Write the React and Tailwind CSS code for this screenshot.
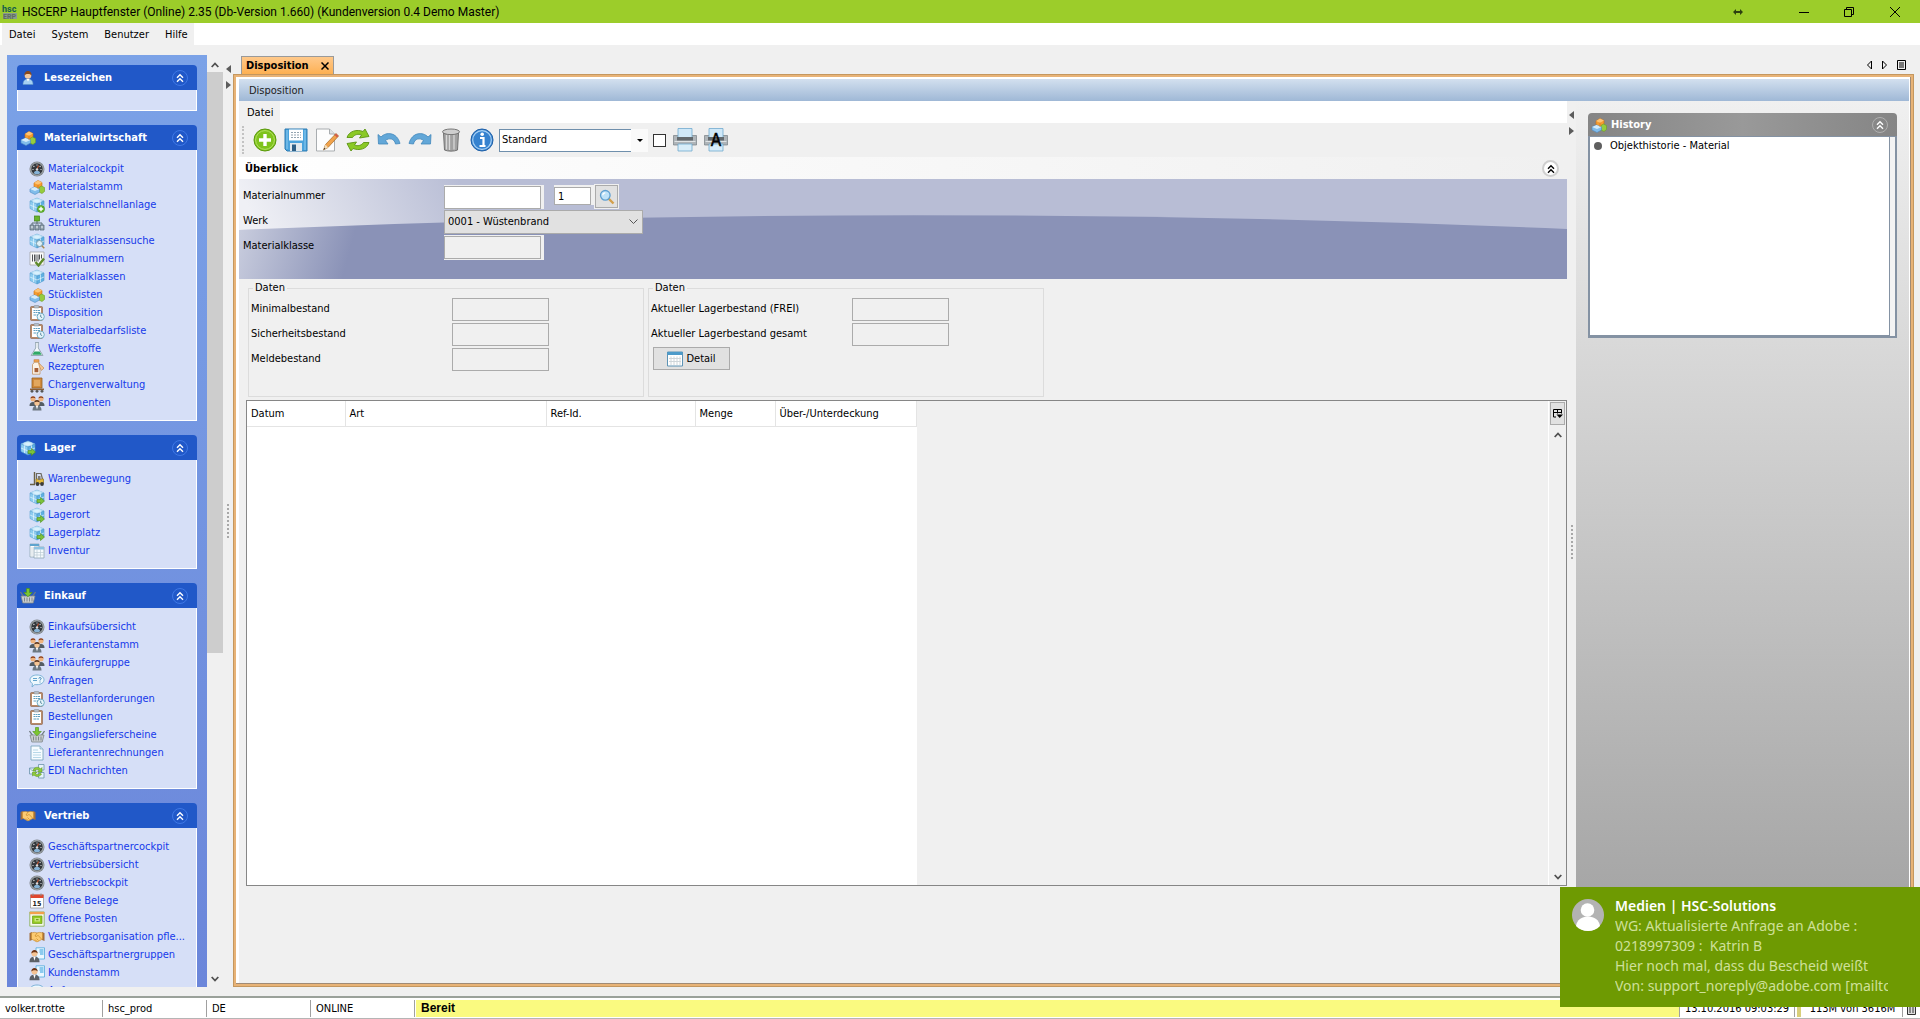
import { useState } from "react";

const groups = [
  { title: "Lesezeichen", icon: "person", items: [] },
  {
    title: "Materialwirtschaft",
    icon: "blocks",
    items: [
      ["Materialcockpit", "gauge"],
      ["Materialstamm", "blocks"],
      ["Materialschnellanlage", "cubeAdd"],
      ["Strukturen", "tree"],
      ["Materialklassensuche", "cubeSearch"],
      ["Serialnummern", "barcode"],
      ["Materialklassen", "cube"],
      ["Stücklisten", "blocks"],
      ["Disposition", "clipClock"],
      ["Materialbedarfsliste", "clipClock"],
      ["Werkstoffe", "flask"],
      ["Rezepturen", "bottle"],
      ["Chargenverwaltung", "crate"],
      ["Disponenten", "people"],
    ],
  },
  {
    title: "Lager",
    icon: "cubeArrow",
    items: [
      ["Warenbewegung", "forklift"],
      ["Lager", "cubeArrow"],
      ["Lagerort", "cubeArrow"],
      ["Lagerplatz", "cubeArrow"],
      ["Inventur", "sheets"],
    ],
  },
  {
    title: "Einkauf",
    icon: "basket",
    items: [
      ["Einkaufsübersicht", "gauge"],
      ["Lieferantenstamm", "people"],
      ["Einkäufergruppe", "people"],
      ["Anfragen", "bubble"],
      ["Bestellanforderungen", "clipClock"],
      ["Bestellungen", "clip"],
      ["Eingangslieferscheine", "basket"],
      ["Lieferantenrechnungen", "page"],
      ["EDI Nachrichten", "edi"],
    ],
  },
  {
    title: "Vertrieb",
    icon: "handshake",
    items: [
      ["Geschäftspartnercockpit", "gauge"],
      ["Vertriebsübersicht", "gauge"],
      ["Vertriebscockpit", "gauge"],
      ["Offene Belege", "calendar"],
      ["Offene Posten", "posten"],
      ["Vertriebsorganisation pfle...", "handshake"],
      ["Geschäftspartnergruppen", "contact"],
      ["Kundenstamm", "contact"],
      ["Anfragen", "bubble"],
    ],
  },
];

const cube = (
  <>
    <path d="M1 4 8 1l7 3-7 3z" fill="#c9e9fa" stroke="#6fb3dc" strokeWidth=".6" />
    <path d="M1 4l7 3v8l-7-3.500z" fill="#8fcdf0" stroke="#5aa4d3" strokeWidth=".6" />
    <path d="M15 4 8 7v8l7-3.500z" fill="#5fb0e2" stroke="#4b97cb" strokeWidth=".6" />
    <path d="M1 8l7 3 7-3M4.500 2.500l7 3v7.500M11.500 2.500l-7 3v7.500" fill="none" stroke="#e4f5fd" strokeWidth=".7" />
  </>
);

const clipboard = (
  <>
    <rect x="1.500" y="1.500" width="12" height="14" rx="1" fill="#b98a68" stroke="#8a5f43" strokeWidth=".6" />
    <rect x="3" y="3" width="9" height="11" fill="#fff" />
    <rect x="5" y=".5" width="5" height="2.500" rx=".8" fill="#b9c0c7" stroke="#7b858e" strokeWidth=".5" />
    <path d="M4.500 5.500h2M7 5.500h1.500M9 5.500h2M4.500 7.500h2M7 7.500h1.500M9 7.500h2M4.500 10h3M8 10h2" stroke="#5f9fc0" strokeWidth="1.200" />
  </>
);

const icons = {
  person: (
    <>
      <path d="M3 14.500c0-4 2-5.500 5-5.500s5 1.500 5 5.500z" fill="#a5d0f2" stroke="#5d93c7" strokeWidth=".6" />
      <path d="M6.500 9 8 11.500 9.500 9z" fill="#fff" />
      <circle cx="8" cy="5.500" r="3.300" fill="#f3c9a0" />
      <path d="M4.500 6C4 2.500 6 1 8 1s4 1.500 3.500 5C11 4.500 10 4 8 4S5 4.500 4.500 6z" fill="#8a4a1f" />
    </>
  ),
  blocks: (
    <>
      <path d="M5 4 9 1.500 13 3.500v4L9 10 5 8z" fill="#f59c2f" stroke="#c9701a" strokeWidth=".6" />
      <path d="M5 4 9 1.500 13 3.500 9 5.700z" fill="#fcc476" />
      <path d="M10 8.500 12.500 7 15.500 8.500v4L13 14.500l-3-1.500z" fill="#95cc3f" stroke="#6b9e22" strokeWidth=".6" />
      <path d="M1 10l4.500-2 5 2v3L6 15.500 1 13z" fill="#82bdeb" stroke="#4d8ac4" strokeWidth=".6" />
      <path d="M1 10l4.500-2 5 2L6 12z" fill="#d3ebfb" />
      <path d="M9 5.700V10" stroke="#c9701a" strokeWidth=".6" />
    </>
  ),
  gauge: (
    <>
      <circle cx="8" cy="8" r="7.500" fill="#7f868b" />
      <circle cx="8" cy="8" r="6.200" fill="#33383c" stroke="#c5cacd" strokeWidth=".8" />
      <path d="M8 3.500v1M4.500 5l.8.800M11.500 5l-.8.800M3.500 8.500h1M11.500 8.500h1" stroke="#e8e8e8" strokeWidth="1.100" />
      <path d="M8 8.500 9.500 4.500" stroke="#e55a2b" strokeWidth="1" />
      <path d="M4.800 12.200c.7-3.200 5.700-3.200 6.400 0-1.800 1.400-4.600 1.400-6.400 0z" fill="#86b3d6" />
      <circle cx="8" cy="8.500" r="1.200" fill="#d9dcde" />
    </>
  ),
  cube,
  cubeAdd: (
    <>
      {cube}
      <circle cx="12" cy="12" r="3.600" fill="#62b32b" stroke="#3f8a12" strokeWidth=".5" />
      <path d="M12 9.800v4.400M9.800 12h4.400" stroke="#fff" strokeWidth="1.400" />
    </>
  ),
  cubeSearch: (
    <>
      {cube}
      <circle cx="10.500" cy="10.500" r="3" fill="#dff1f7" stroke="#7b98a4" strokeWidth=".9" />
      <path d="m12.800 12.800 2.500 2.500" stroke="#a78951" strokeWidth="1.500" />
    </>
  ),
  cubeArrow: (
    <>
      {cube}
      <path d="M8 10.500h3.500V8.500l4 3.500-4 3.500v-2H8z" fill="#7cc13a" stroke="#4c8d17" strokeWidth=".6" />
    </>
  ),
  tree: (
    <>
      <path d="M8 6v3M3 10V8h10v2" fill="none" stroke="#5b6d75" />
      <rect x="5.500" y="1" width="5" height="5" fill="#6ab42d" stroke="#3f8212" strokeWidth=".7" />
      <path d="M1 10h4v5H1zM6 10h4v5H6zM11 10h4v5h-4z" fill="#98a7b2" stroke="#4f6170" strokeWidth=".7" />
      <path d="M2 12h2M7 12h2M12 12h2" stroke="#e6edf2" />
    </>
  ),
  barcode: (
    <>
      <path d="M1 1h14v13H1z" fill="#fafafa" stroke="#9b9b9b" strokeWidth=".7" />
      <path d="M3.500 3.500v7M5.500 3.500v7M7 3.500v7M9 3.500v7M10.500 3.500v5M12.500 3.500v4" stroke="#4f5254" />
      <path d="m6.500 11 3 3.500 5.500-7" fill="none" stroke="#5f8b2b" strokeWidth="2.400" />
    </>
  ),
  clip: clipboard,
  clipClock: (
    <>
      {clipboard}
      <circle cx="11.700" cy="11.700" r="3.600" fill="#e8f6fb" stroke="#65a5bd" strokeWidth=".9" />
      <path d="M11.700 9.700v2.200l1.500.8" fill="none" stroke="#3c7590" strokeWidth=".8" />
    </>
  ),
  flask: (
    <>
      <path d="M6 1.500h4M6.700 1.500V7L2 14.500h12L9.300 7V1.500" fill="#f3f8fb" stroke="#9aaab6" />
      <path d="m5.300 10.500-2 3.300h9.400l-2-3.300z" fill="#2fa866" />
    </>
  ),
  bottle: (
    <>
      <rect x="5" y=".8" width="5" height="2.400" fill="#f0a14d" stroke="#b86d22" strokeWidth=".5" />
      <path d="M5.500 3.200h4L11 5.500v9.700H3.500V5.500z" fill="#fbf3e8" stroke="#c29362" strokeWidth=".8" />
      <path d="M5.500 9h3.800v4.200H5.500z" fill="#a65f36" />
      <path d="m9.500 4 5.500 5-2.500 2.500-2-4z" fill="#f4c894" stroke="#bf8345" strokeWidth=".6" />
    </>
  ),
  crate: (
    <>
      <path d="M3 1h10v10H3z" fill="#d08a3c" stroke="#98601f" strokeWidth=".8" />
      <path d="M5 3h6v6H5z" fill="#e2a75e" />
      <path d="M1 11.500h14v1.700H1z" fill="#8b5e35" />
      <circle cx="3" cy="14.300" r="1.400" fill="#555" />
      <circle cx="8" cy="14.300" r="1.400" fill="#555" />
      <circle cx="13" cy="14.300" r="1.400" fill="#555" />
    </>
  ),
  people: (
    <>
      <path d="M.5 11c0-3 1.500-4 3.500-4s3.500 1 3.500 4zM8.500 11c0-3 1.500-4 3.500-4s3.500 1 3.500 4z" fill="#535c63" />
      <circle cx="4" cy="4" r="2.500" fill="#efb37e" />
      <circle cx="12" cy="4" r="2.500" fill="#efb37e" />
      <path d="M1.500 3.500C1.500.5 6.500.5 6.500 3.500 5.500 2.500 3 2.500 1.500 3.500zM9.500 3.500c0-3 5-3 5 0-1-1-4-1-5 0z" fill="#8b3f1c" />
      <path d="M3.500 15.500C3.500 12 5 10.500 8 10.500s4.500 1.500 4.500 5z" fill="#6c7780" />
      <path d="m6.800 10.500 1.200 4 1.200-4z" fill="#fff" />
      <circle cx="8" cy="8" r="2.700" fill="#f5c493" />
      <path d="M5.300 7.500c0-3.200 5.400-3.200 5.400 0-1-1-4.400-1-5.400 0z" fill="#5a3218" />
    </>
  ),
  forklift: (
    <>
      <path d="M5.500 1v12M1 13.500h5" fill="none" stroke="#6a6046" strokeWidth="1.400" />
      <path d="M7.500 8V2.500h4.500L13.500 8" fill="none" stroke="#6d6a60" strokeWidth="1.200" />
      <path d="M7 8h7.500v4.500H7z" fill="#e5bb3d" stroke="#94741b" strokeWidth=".7" />
      <path d="M9 5h2.500v4H9z" fill="#807b70" />
      <circle cx="8.500" cy="13" r="1.900" fill="#3c3c3c" />
      <circle cx="13" cy="13" r="1.900" fill="#3c3c3c" />
    </>
  ),
  sheets: (
    <>
      <path d="M1 1h9v13H1z" fill="#fff" stroke="#8fa6b5" strokeWidth=".8" />
      <path d="M1 1h9v2H1z" fill="#5ea4ce" />
      <path d="M5 4h10v11H5z" fill="#f6fbfe" stroke="#8fa6b5" strokeWidth=".8" />
      <path d="M5 4h10v2.500H5z" fill="#8ec3e2" />
      <path d="M8 6.500V15M11.500 6.500V15M5 9.500h10M5 12h10M3 4v9" stroke="#bccbd4" strokeWidth=".7" />
    </>
  ),
  basket: (
    <>
      <path d="M.5 4 4 9M15.500 4 12 9" stroke="#6f7a80" strokeWidth="1.300" />
      <path d="M1 8h14l-1.800 7H2.800z" fill="#c9cdcf" stroke="#7d8589" strokeWidth=".8" />
      <path d="M4.500 9.500v4M7 9.500v4M9.500 9.500v4M12 9.500v4" stroke="#80878b" />
      <path d="M6.500.5h3v4h2.800L8 8.800 3.700 4.500h2.800z" fill="#7cc62f" stroke="#4b8f12" strokeWidth=".6" />
    </>
  ),
  bubble: (
    <>
      <path d="M8 2c4 0 7 2 7 4.800s-3 4.900-7 4.900c-.8 0-1.500 0-2.200-.2L3 14l.5-3.300C2 9.800 1 8.400 1 6.800 1 4 4 2 8 2z" fill="#edf8fe" stroke="#72acd3" strokeWidth=".9" />
      <path d="M4 5.500h4M4 7.500h4" stroke="#62a3cd" strokeWidth="1.200" />
      <path d="M9.800 5.500c0-1.200 2.400-1.200 2.400 0 0 1-1.200 1-1.200 2M11 8.500v1" fill="none" stroke="#3d82b4" strokeWidth="1" />
    </>
  ),
  page: (
    <>
      <path d="M2 1h9l3 3v11H2z" fill="#f7fcff" stroke="#7ea7bd" strokeWidth=".9" />
      <path d="M11 1v3h3" fill="#cbe3ef" stroke="#7ea7bd" strokeWidth=".7" />
      <path d="M4 5h5M4 7.500h8M4 10h8M4 12.500h8" stroke="#b7d8e8" strokeWidth="1.100" />
    </>
  ),
  edi: (
    <>
      <path d="M.5 5h6v6h-6zM9.500 1.500H15V7H9.500zM9.500 9.500H15V15H9.500z" fill="#e7f3fa" stroke="#6b93ad" strokeWidth=".8" />
      <path d="m.5 5 3 3 3-3" fill="none" stroke="#6b93ad" strokeWidth=".7" />
      <path d="M4 8c0-4 6-5 7.500-2L13 4.500V9H8.500L10 7.500C9 6 6.500 6.500 6 8zM3.500 9H8l-1.500 1.500c1 1.500 3.500 1 4.500-.5l1.500 1c-1.500 3-5.500 3.200-7.500 1L3.500 13z" fill="#8fca3b" stroke="#58931a" strokeWidth=".5" />
    </>
  ),
  handshake: (
    <>
      <path d="M.5 4 3 3v8L.5 12zM15.500 4 13 3v8l2.500 1z" fill="#a4703c" />
      <path d="M2.500 4c2-.8 4-.8 5.500 0 1.500-.8 3.500-.8 5.500 0v6l-4.500 2.500c-.8.400-1.500.3-2 0L2.500 10z" fill="#fccb72" stroke="#cc8e30" strokeWidth=".7" />
      <path d="M8 4 6 7c1.500 1 2.500 0 3-.700l3.500 3.700M7.500 9.500l2 2M6 10.500l1.500 1.500" fill="none" stroke="#c98927" strokeWidth=".7" />
    </>
  ),
  calendar: (
    <>
      <path d="M1.500 2h13v13h-13z" fill="#fff" stroke="#9a9a9a" strokeWidth=".8" />
      <path d="M1.500 1.500h13v3.500h-13z" fill="#e0472f" />
      <path d="M4 .5v2.500M12 .5v2.500" stroke="#888" />
      <text x="8" y="12.500" fontSize="7" fontWeight="bold" textAnchor="middle" fill="#222">15</text>
    </>
  ),
  posten: (
    <>
      <path d="M.8 1h14.400v14.200H.8z" fill="#f4f8ea" stroke="#84ab4d" strokeWidth=".8" />
      <path d="M.8.8h14.400v2.400H.8z" fill="#f2a14c" />
      <path d="M3.500 5h9.500v7.500H3.500z" fill="#93c921" stroke="#6d9e12" strokeWidth=".7" />
      <path d="M5.500 7H11v3.500H5.500z" fill="#c9e77d" />
      <path d="M7 8.700h2.500" stroke="#5d8b0d" />
    </>
  ),
  contact: (
    <>
      <path d="M7 .8h8.500V12H7z" fill="#eaf7ff" stroke="#4fa9dc" strokeWidth=".8" />
      <path d="M10.500 3h4M10.500 5h4M11 7h3.500" stroke="#2c9ddd" strokeWidth="1.200" />
      <path d="M.5 15.200c0-4.200 2-5.400 5-5.400s5 1.200 5 5.400z" fill="#5c6166" />
      <path d="m4.300 9.800 1.200 4 1.200-4z" fill="#fff" />
      <circle cx="5.500" cy="6.500" r="3" fill="#f5c493" />
      <path d="M2.400 6.500C2 1.800 9 1.800 8.600 6.500 7.500 4.800 4 4.800 2.400 6.500z" fill="#6d3415" />
    </>
  ),
};

function Icon({ name }) {
  return (
    <svg viewBox="0 0 16 16" className="size-4 shrink-0" aria-hidden="true">
      {icons[name]}
    </svg>
  );
}

function DoubleChevron() {
  return (
    <svg viewBox="0 0 10 10" className="size-[10px]" fill="none" stroke="currentColor" strokeWidth="1.400" aria-hidden="true">
      <path d="M2 4.700 5 1.700l3 3M2 8.700l3-3 3 3" />
    </svg>
  );
}

function Chevron({ down = false }) {
  return (
    <svg viewBox="0 0 8 8" className="size-2" fill="none" stroke="#505050" strokeWidth="1.800" aria-hidden="true">
      <path d={down ? "M.7 2 4 5.500 7.300 2" : "M.7 6 4 2.500 7.300 6"} />
    </svg>
  );
}

function Splitter({ className }) {
  return (
    <div className={`relative flex shrink-0 items-center justify-center ${className}`}>
      <div className="absolute inset-x-0 top-2.5 flex flex-col items-center gap-2">
        <svg viewBox="0 0 5 8" className="h-2 w-[5px]" aria-hidden="true">
          <path d="M5 0v8L0 4z" fill="#5c5c5c" />
        </svg>
        <svg viewBox="0 0 5 8" className="h-2 w-[5px]" aria-hidden="true">
          <path d="M0 0v8l5-4z" fill="#5c5c5c" />
        </svg>
      </div>
      <div className="flex flex-col gap-0.5">
        {Array.from({ length: 9 }, (_, i) => (
          <span key={i} className="size-0.5 bg-[#a8a8a8]" />
        ))}
      </div>
    </div>
  );
}

function Group({ title, icon, items }) {
  const [open, setOpen] = useState(true);

  return (
    <section>
      <h2 className="flex h-[25px] items-center rounded-t-[4px] bg-[#2158c8] pr-[9px] pl-[3px] font-bold text-white">
        <Icon name={icon} />
        <span className="ml-2 flex-1">{title}</span>
        <button
          type="button"
          aria-label={title}
          onClick={() => setOpen(!open)}
          className="flex size-4 items-center justify-center rounded-full border border-[#3f78e6]"
        >
          <DoubleChevron />
        </button>
      </h2>
      {open && (
        <ul className={`border border-t-0 border-white bg-[#d6dff7] pl-[11px] ${items.length ? "pt-[10px] pb-2" : "pt-5"}`}>
          {items.map(([label, name]) => (
            <li key={label}>
              <a href="#" className="flex h-[18px] items-center gap-[3px] whitespace-nowrap text-[#1539ea]">
                <Icon name={name} />
                {label}
              </a>
            </li>
          ))}
        </ul>
      )}
    </section>
  );
}

const printer = (
  <>
    <path d="M.5 7.500h23V17H.5z" fill="#aeb4b8" stroke="#777f84" strokeWidth=".7" />
    <path d="M5 .5h14v9H5z" fill="#cfe8f8" stroke="#70a9ce" strokeWidth=".8" />
    <path d="M4 9h16v3.500H4z" fill="#62696e" />
    <path d="M1.500 13.500h21" stroke="#dfe3e5" />
    <path d="M5 16h14v7H5z" fill="#d8edf9" stroke="#70a9ce" strokeWidth=".8" />
  </>
);

const tools = [
  [
    "Neu",
    <>
      <circle cx="12" cy="12" r="11" fill="#7fc31c" stroke="#59980c" />
      <circle cx="12" cy="12" r="9.400" fill="none" stroke="#b3e063" />
      <path d="M12 6v12M6 12h12" stroke="#fff" strokeWidth="3.400" />
    </>,
  ],
  [
    "Speichern",
    <>
      <path d="M1 1h22v22H3l-2-2z" fill="#4ba3dc" stroke="#2d7ab2" />
      <path d="M3 2v19M21 2v20" stroke="#8fcbf0" />
      <path d="M5 1.500h14v11H5z" fill="#fff" />
      <path d="M7 4.500h10M7 7h10M7 9.500h10" stroke="#93a4b0" strokeWidth="1.100" strokeDasharray="2 1" />
      <path d="M6 15h12v8H6z" fill="#e3e9ed" />
      <path d="M8 16.500h4V23H8z" fill="#2e5f86" />
    </>,
  ],
  [
    "Bearbeiten",
    <>
      <path d="M1.500 1h13l5 5v17h-18z" fill="#fdfdfd" stroke="#a9adb0" />
      <path d="M14.500 1v5h5" fill="#dfe2e4" stroke="#a9adb0" />
      <path d="m8.500 22 2-5.500L21 5.500l2.500 2.500L13 19.500z" fill="#f0a24b" stroke="#a56822" strokeWidth=".7" />
      <path d="m8.500 22 2-5.500 2.500 3z" fill="#f4ddb9" />
      <path d="m8.500 22 .8-2.200 1.200 1z" fill="#333" />
      <path d="m19.500 7 1.500-1.500 2.500 2.500-1.500 1.500z" fill="#d25c4a" />
    </>,
  ],
  [
    "Aktualisieren",
    <>
      <path d="M1 9.500C3 3 11 1 17 3.500L19 1l4 7.500-9.500 1.500 2-3C12.500 5.500 8.500 6.500 6.500 9.500z" fill="#8bc926" stroke="#5c9413" strokeWidth=".9" />
      <path d="M23 14.500C21 21 13 23 7 20.500L5 23l-4-7.500L10.500 14l-2 3c3 1.500 7 .5 9-2.500z" fill="#8bc926" stroke="#5c9413" strokeWidth=".9" />
    </>,
  ],
  [
    "Rückgängig",
    <path d="M1 6.500 4 9C9 3.500 20 4 23 15.500l-4.500.5C17.500 10.500 12 9.500 8.500 12.500L11 16H1.500z" fill="#62a7d8" stroke="#4288bb" strokeWidth=".8" />,
  ],
  [
    "Wiederholen",
    <path d="M23 6.500 20 9C15 3.500 4 4 1 15.500l4.500.5C6.500 10.500 12 9.500 15.500 12.500L13 16h9.500z" fill="#62a7d8" stroke="#4288bb" strokeWidth=".8" />,
  ],
  [
    "Löschen",
    <>
      <path d="M4.500 5h15l-1 17c-3 1.500-10 1.500-13 0z" fill="#a2a2a2" stroke="#727272" />
      <path d="M7.500 7v14.500M10.500 7v15M15 7v14.500" stroke="#d8d8d8" strokeWidth="1.300" />
      <ellipse cx="12" cy="3.800" rx="8.500" ry="2.800" fill="#cfcfcf" stroke="#777" />
    </>,
  ],
  [
    "Info",
    <>
      <circle cx="12" cy="12" r="11" fill="#3582cf" stroke="#1f5fa6" />
      <circle cx="12" cy="12" r="9.300" fill="none" stroke="#a9d2f5" strokeWidth="1.200" />
      <path d="M10 10h3.500v7.500M9.500 18h6" fill="none" stroke="#fff" strokeWidth="2.200" />
      <circle cx="12.200" cy="6.300" r="1.800" fill="#fff" />
    </>,
  ],
];

function ToolButton({ label, children }) {
  return (
    <button type="button" aria-label={label} className="flex size-6 shrink-0 items-center justify-center">
      <svg viewBox="0 0 24 24" className="size-6" aria-hidden="true">
        {children}
      </svg>
    </button>
  );
}

function Field({ id, label }) {
  return (
    <div className="flex h-[25px] items-center">
      <label htmlFor={id} className="w-[201px] pb-0.5">{label}</label>
      <input id={id} readOnly className="h-[23px] w-[97px] border border-[#ababab] bg-[#f0f0f0] px-1" />
    </div>
  );
}

function Toolbar() {
  return (
    <div className="flex h-[34px] items-center gap-[7px] bg-[#f0f0f0] pl-[3px]">
      <span className="mr-0.5 h-7 border-l-2 border-dotted border-[#c2c2c2]" />
      {tools.map(([label, drawing]) => (
        <ToolButton key={label} label={label}>{drawing}</ToolButton>
      ))}
      <div className="relative -ml-0.5 flex">
        <select aria-label="Ansicht" className="h-[23px] w-[149px] appearance-none border border-[#6f8fac] bg-white px-0.5">
          <option>Standard</option>
        </select>
        <span className="pointer-events-none absolute inset-y-0 right-0 flex w-[17px] items-center justify-center bg-[#fafafa]">
          <svg viewBox="0 0 6 3" className="h-[3px] w-1.5" aria-hidden="true">
            <path d="M0 0h6L3 3z" />
          </svg>
        </span>
      </div>
      <input
        type="checkbox"
        aria-label="Filter"
        className="-ml-0.5 size-[13px] appearance-none border border-[#333] bg-white checked:bg-[#333]"
      />
      <ToolButton label="Drucken">{printer}</ToolButton>
      <ToolButton label="Druckvorschau">
        {printer}
        <text x="12" y="18" fontSize="17" textAnchor="middle" stroke="#000" strokeWidth=".5">A</text>
      </ToolButton>
    </div>
  );
}

function Overview() {
  return (
    <section>
      <div className="flex h-[22px] items-center justify-between bg-linear-to-r from-white to-[#f0f0f0] pt-px pr-2 pl-1.5">
        <h2 className="font-bold">Überblick</h2>
        <button
          type="button"
          aria-label="Überblick"
          className="flex size-[17px] items-center justify-center rounded-full border-2 border-[#cfcfcf] bg-white"
        >
          <DoubleChevron />
        </button>
      </div>
      <div className="relative h-[100px] bg-[#b8bdd5]">
        <svg viewBox="0 0 1328 100" preserveAspectRatio="none" className="absolute inset-0 size-full" aria-hidden="true">
          <defs>
            <linearGradient id="upper" gradientUnits="userSpaceOnUse" x1="20" y1="50" x2="200" y2="-40">
              <stop offset="0" stopColor="#eff0f5" />
              <stop offset="1" stopColor="#b8bdd5" />
            </linearGradient>
            <linearGradient id="lower" gradientUnits="userSpaceOnUse" x1="0" y1="45" x2="110" y2="75">
              <stop offset="0" stopColor="#c9cdde" />
              <stop offset="1" stopColor="#8a92b7" />
            </linearGradient>
          </defs>
          <path d="M0 0h1328v100H0z" fill="url(#upper)" />
          <path d="M0 51Q664 22 1328 50v50H0z" fill="url(#lower)" />
        </svg>
        <div className="relative grid grid-cols-[201px_1fr] content-start pt-[6px] pl-1">
          <label htmlFor="material" className="pt-1">Materialnummer</label>
          <div className="flex h-[25px] items-start">
            <div className="h-6 w-[100px] bg-[#f0f0f0] pt-px">
              <input id="material" className="block h-[23px] w-[97px] border border-[#ababab] bg-white px-1" />
            </div>
            <div className="ml-2.5 h-5 w-[41px] bg-[#f0f0f0] pt-0.5">
              <input aria-label="Anzahl" defaultValue="1" className="block h-[18px] w-[37px] border border-[#ababab] bg-white px-[3px]" />
            </div>
            <button
              type="button"
              aria-label="Suchen"
              className="flex h-[23px] w-[23px] items-center justify-center border border-[#ababab] bg-[#e1e1e1] outline outline-[#f0f0f0]"
            >
              <svg viewBox="0 0 16 16" className="size-4" aria-hidden="true">
                <path d="m9.500 9.500 5 5" stroke="#d4a04b" strokeWidth="2.400" />
                <circle cx="6.300" cy="6.300" r="4.800" fill="#bfe2f8" stroke="#5f9fd0" strokeWidth="1.300" />
                <path d="M3.800 6.300c0-1.500 1-2.500 2.500-2.500" fill="none" stroke="#fff" strokeWidth="1.200" />
              </svg>
            </button>
          </div>
          <label htmlFor="werk" className="pt-1">Werk</label>
          <div className="relative h-[25px] w-[199px]">
            <select id="werk" className="block h-6 w-full appearance-none border border-[#ababab] bg-[#e1e1e1] px-[3px]">
              <option>0001 - Wüstenbrand</option>
            </select>
            <svg viewBox="0 0 9 6" className="pointer-events-none absolute top-[9px] right-[5px] h-1.5 w-[9px]" fill="none" stroke="#555" aria-hidden="true">
              <path d="m.5.5 4 4 4-4" />
            </svg>
          </div>
          <label htmlFor="klasse" className="pt-1">Materialklasse</label>
          <div className="h-[25px] w-[100px] bg-[#f0f0f0] pt-px">
            <input id="klasse" readOnly className="block h-[23px] w-[97px] border border-[#ababab] bg-[#f0f0f0] px-1" />
          </div>
        </div>
      </div>
    </section>
  );
}

const columns = [
  ["Datum", "w-[98px]"],
  ["Art", "w-[201px]"],
  ["Ref-Id.", "w-[149px]"],
  ["Menge", "w-[80px]"],
  ["Über-/Unterdeckung", "w-[141px]"],
];

function ResultTable() {
  return (
    <div className="mb-[97px] ml-[7px] flex min-h-0 flex-1 border border-[#868686] bg-[#f0f0f0]">
      <div className="bg-white">
        <table className="table-fixed border-collapse">
          <thead>
            <tr>
              {columns.map(([label, width]) => (
                <th key={label} className={`h-[25px] border-r border-b border-[#e4e4e4] pt-0.5 pl-1 text-left font-normal ${width}`}>
                  {label}
                </th>
              ))}
            </tr>
          </thead>
        </table>
      </div>
      <div className="ml-auto flex w-[18px] flex-col items-center justify-between border-l border-white pt-px pb-1">
        <div className="flex flex-col items-center gap-1.5">
          <button type="button" aria-label="Spalten" className="flex h-[23px] w-[15px] items-center justify-center border border-[#ababab] bg-[#e1e1e1]">
            <svg viewBox="0 0 10 11" className="h-[11px] w-[10px]" aria-hidden="true">
              <path d="M3 9H.5V1.500h8v4M.5 4.500h8M4.500 1.500v4" fill="none" stroke="#000" />
              <path d="M3.500 6.500H10L6.700 10z" />
            </svg>
          </button>
          <Chevron />
        </div>
        <Chevron down />
      </div>
    </div>
  );
}

function HistoryPanel() {
  return (
    <aside className="w-[333px] shrink-0 bg-linear-to-b from-[#f0f0f0] to-[#9e9e9e] px-3 pt-3">
      <h2 className="flex h-[23px] items-center rounded-t-[4px] bg-linear-to-r from-[#858585] via-[#999] to-[#858585] pr-[9px] pl-[3px] font-bold text-white">
        <Icon name="blocks" />
        <span className="ml-1 flex-1">History</span>
        <button type="button" aria-label="History" className="flex size-4 items-center justify-center rounded-full border border-[#b0b0b0]">
          <DoubleChevron />
        </button>
      </h2>
      <div className="border-2 border-t border-[#8492a3] bg-[#f3f3f3] pr-[5px]">
        <ul className="h-[199px] border-r border-b border-[#8492a3] bg-white">
          <li className="flex h-[18px] items-center gap-2 pl-1">
            <span className="size-2 rounded-full bg-[#5f5f5f]" />
            Objekthistorie - Material
          </li>
        </ul>
      </div>
    </aside>
  );
}

function Toast() {
  return (
    <div role="status" className="absolute right-0 bottom-3 flex h-[120px] w-[360px] gap-[11px] overflow-hidden bg-[#6e9a02] pt-[9px] pr-8 pl-3 font-['Noto_Sans','Open_Sans',sans-serif] text-[14px] leading-5 text-[#cfe09a]">
      <svg viewBox="0 0 32 32" className="mt-[3px] size-8 shrink-0" aria-hidden="true">
        <circle cx="16" cy="16" r="16" fill="#b3b3b3" />
        <circle cx="15.500" cy="11" r="6.800" fill="#fff" />
        <path d="M4 27c1-6 5.500-9.500 12-9.500S27 21 28 27c-6 6.600-18 6.600-24 0z" fill="#fff" />
      </svg>
      <div className="min-w-0 overflow-hidden whitespace-pre">
        <p className="font-semibold text-white">Medien | HSC-Solutions</p>
        <p>WG: Aktualisierte Anfrage an Adobe :</p>
        <p>{"0218997309 :  Katrin B"}</p>
        <p>Hier noch mal, dass du Bescheid weißt</p>
        <p>Von: support_noreply@adobe.com [mailto</p>
      </div>
    </div>
  );
}

export default function App() {
  return (
    <div className="relative flex h-screen flex-col overflow-hidden bg-[#f0f0f0] font-['DejaVu_Sans_Condensed','Noto_Sans',sans-serif] text-[11px] leading-[14px] text-black">
      <header className="flex h-[23px] shrink-0 items-center bg-[#9ccd2a] pr-4 pl-0.5 font-['Roboto','Open_Sans',sans-serif] text-[12px]">
        <svg viewBox="0 0 16 16" className="mr-1 size-4" aria-hidden="true">
          <path d="M1 9h14v6H1z" fill="#8a9a8c" />
          <text x="0" y="8" fontSize="9" fontWeight="bold" fill="#145d4c">hsc</text>
          <text x="1" y="15" fontSize="7" fontWeight="bold" fill="#5d6d60">ERP</text>
        </svg>
        <h1 className="flex-1">HSCERP Hauptfenster (Online) 2.35 (Db-Version 1.660) (Kundenversion 0.4 Demo Master)</h1>
        <svg viewBox="0 0 10 6" className="mr-14 h-1.5 w-[10px]" aria-hidden="true">
          <path d="M0 3 3 0v2h4V0l3 3-3 3V4H3v2z" fill="#2d4010" />
        </svg>
        <button type="button" aria-label="Minimieren" className="mr-[35px]">
          <svg viewBox="0 0 10 10" className="size-[10px]" stroke="#000" aria-hidden="true"><path d="M0 5.500h10" /></svg>
        </button>
        <button type="button" aria-label="Wiederherstellen" className="mr-9">
          <svg viewBox="0 0 10 10" className="size-[10px]" fill="none" stroke="#000" aria-hidden="true">
            <path d="M.5 2.500h7v7h-7zM2.500 2.500v-2h7v7h-2" />
          </svg>
        </button>
        <button type="button" aria-label="Schließen" className="mr-1">
          <svg viewBox="0 0 10 10" className="size-[10px]" stroke="#000" aria-hidden="true"><path d="m0 0 10 10M10 0 0 10" /></svg>
        </button>
      </header>

      <nav className="flex h-[22px] shrink-0 bg-white pl-0.5">
        <div className="flex items-center gap-4 bg-[#f0f0f0] px-[7px] pt-0.5">
          <button type="button">Datei</button>
          <button type="button">System</button>
          <button type="button">Benutzer</button>
          <button type="button">Hilfe</button>
        </div>
      </nav>

      <div className="flex min-h-0 flex-1 pt-2.5 pr-1.5 pl-[7px]">
        <nav className="flex w-[200px] shrink-0 flex-col gap-3.5 overflow-hidden bg-linear-to-b from-[#7ba2e7] to-[#6b86da] p-2.5">
          {groups.map((group) => (
            <Group key={group.title} {...group} />
          ))}
        </nav>
        <div className="flex w-4 shrink-0 flex-col items-center bg-[#f0f0f0] pt-1.5 pb-1">
          <Chevron />
          <div className="mt-[3px] h-[63%] w-full bg-[#cdcdcd]" />
          <span className="mt-auto"><Chevron down /></span>
        </div>
        <Splitter className="w-2.5" />

        <div className="flex min-w-0 flex-1 flex-col">
          <div className="flex h-[19px] shrink-0 items-end justify-between pr-2 pl-2">
            <div className="flex h-[18px] items-center gap-3 border border-b-0 border-[#9a9a9a] bg-linear-to-b from-[#ffc98a] to-[#fdb052] pr-1 pl-1 font-bold">
              Disposition
              <button type="button" aria-label="Tab schließen">
                <svg viewBox="0 0 8 8" className="size-2" stroke="#000" strokeWidth="1.500" aria-hidden="true"><path d="m.5.5 7 7M7.500.5l-7 7" /></svg>
              </button>
            </div>
            <div className="flex items-center gap-2.5 pb-1">
              <svg viewBox="0 0 5 10" className="h-[10px] w-[5px]" fill="none" stroke="#000" aria-hidden="true"><path d="M4.500 1v8L.5 5z" /></svg>
              <svg viewBox="0 0 5 10" className="h-[10px] w-[5px]" fill="none" stroke="#000" aria-hidden="true"><path d="M.5 1v8l4-4z" /></svg>
              <svg viewBox="0 0 9 10" className="h-[10px] w-[9px]" fill="none" stroke="#000" aria-hidden="true"><path d="M.5.5h8v9h-8zM2 3h5M2 5h5M2 7h5" /></svg>
            </div>
          </div>

          <div className="flex min-h-0 flex-1 flex-col border border-[#c4975f]">
            <div className="flex min-h-0 flex-1 flex-col border-2 border-[#e8b377]">
              <div className="flex min-h-0 flex-1 flex-col border-r border-b border-[#a08a75] bg-white pt-0.5 pr-px pl-[3px]">
                <h2 className="flex h-[22px] shrink-0 items-center bg-linear-to-b from-[#d3e0ef] to-[#9fb8d6] pt-px pl-[10px] font-normal text-[#222]">Disposition</h2>
                <div className="flex min-h-0 flex-1 bg-[#f0f0f0]">
                  <main className="flex min-w-0 flex-1 flex-col">
                    <nav className="flex h-[22px] shrink-0 bg-white">
                      <button type="button" className="bg-[#f0f0f0] pt-0.5 pr-[7px] pl-[8px]">Datei</button>
                    </nav>
                    <Toolbar />
                    <Overview />
                    <div className="flex gap-1 pt-0.5 pb-[3px] pl-[9px]">
                      <fieldset className="h-[116px] w-[396px] border border-[#dcdcdc] pl-0.5">
                        <legend className="ml-0.5 px-0.5">Daten</legend>
                        <div className="mt-0.5">
                          <Field id="minimal" label="Minimalbestand" />
                          <Field id="sicherheit" label="Sicherheitsbestand" />
                          <Field id="melde" label="Meldebestand" />
                        </div>
                      </fieldset>
                      <fieldset className="h-[116px] w-[396px] border border-[#dcdcdc] pl-0.5">
                        <legend className="ml-0.5 px-0.5">Daten</legend>
                        <div className="mt-0.5">
                          <Field id="frei" label="Aktueller Lagerbestand (FREI)" />
                          <Field id="gesamt" label="Aktueller Lagerbestand gesamt" />
                          <button type="button" className="ml-0.5 flex h-[23px] w-[77px] items-center justify-center gap-[3px] border border-[#ababab] bg-[#e1e1e1]">
                            <svg viewBox="0 0 16 16" className="size-4" aria-hidden="true">
                              <path d="M.5 1h15v14H.5z" fill="#fff" stroke="#5c93b5" />
                              <path d="M.5 1h15v3H.5z" fill="#4d9bca" />
                              <path d="M4 5.500V14M7 5.500V14M10 5.500V14M13 5.500V14M2 7.500h12M2 10.500h12" stroke="#cfd6da" />
                            </svg>
                            Detail
                          </button>
                        </div>
                      </fieldset>
                    </div>
                    <ResultTable />
                  </main>
                  <Splitter className="w-[9px]" />
                  <HistoryPanel />
                </div>
              </div>
            </div>
          </div>
        </div>
      </div>

      <footer className="mt-[9px] flex h-[23px] shrink-0 items-stretch border-t-2 border-b border-t-[#9aa19a] border-b-[#b5b5b5] bg-white pt-0.5 pb-px leading-[17px]">
        <span className="w-[103px] border-r border-[#a0a0a0] pl-[5px]">volker.trotte</span>
        <span className="w-[104px] border-r border-[#a0a0a0] pl-[5px]">hsc_prod</span>
        <span className="w-[104px] border-r border-[#a0a0a0] pl-[5px]">DE</span>
        <span className="w-[104px] border-r border-[#a0a0a0] pl-[5px]">ONLINE</span>
        <span className="ml-px flex-1 bg-[#fafa80] pl-[5px] font-['Liberation_Sans',sans-serif] text-[12px] font-bold">Bereit</span>
        <span className="w-[116px] border-x border-[#a0a0a0] text-center">13.10.2016 09:03:29</span>
        <span className="mx-0.5 w-1 bg-[#d8cf7a]" />
        <span className="w-[100px] border-r border-[#a0a0a0] text-center">113M von 3616M</span>
        <button type="button" aria-label="Speicher freigeben" className="px-1">
          <svg viewBox="0 0 9 12" className="h-3 w-[9px]" fill="#ddd" stroke="#333" aria-hidden="true">
            <path d="M.5 2.500h8v9h-8zM0 1.500h9M3 4v6M6 4v6" />
          </svg>
        </button>
      </footer>

      <Toast />
    </div>
  );
}
